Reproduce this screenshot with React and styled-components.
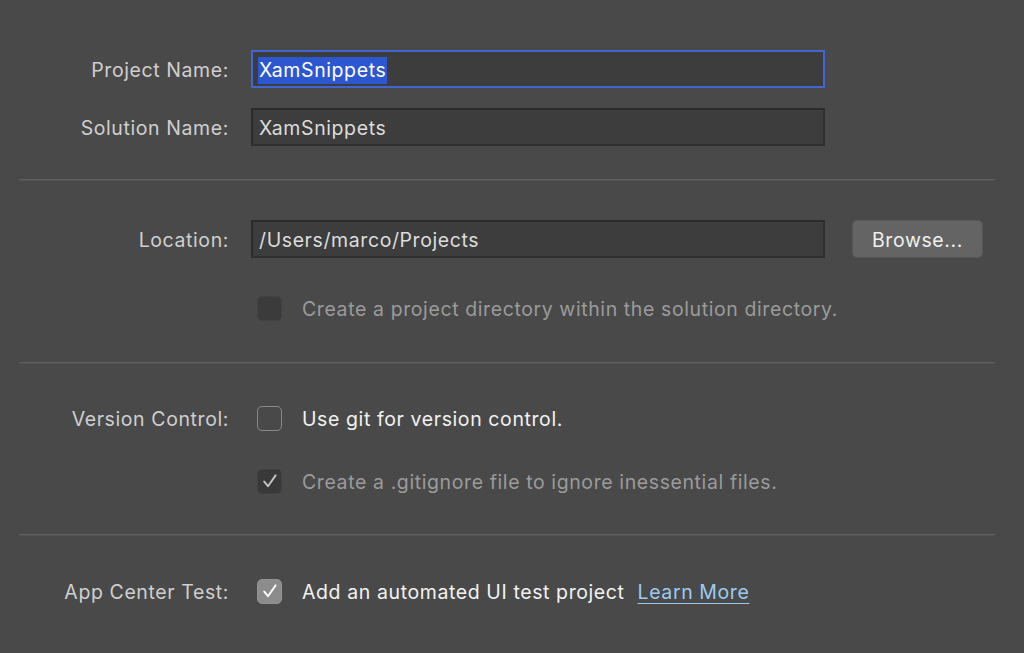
import React from "react";
import styled, { createGlobalStyle } from "styled-components";

const Global = createGlobalStyle`
  html, body {
    margin: 0;
    padding: 0;
    background: #494949;
  }
  body {
    font-family: "Inter", "Liberation Sans", sans-serif;
    -webkit-font-smoothing: antialiased;
  }
`;

export default function App() {
  return (
    <>
      <Global />
      <Page>
        <Section $top={50} $bottom={33}>
          <FieldRow>
            <Label>Project Name:</Label>
            <Input $focused>
              <Selected>XamSnippets</Selected>
            </Input>
          </FieldRow>
          <FieldRow>
            <Label>Solution Name:</Label>
            <Input>XamSnippets</Input>
          </FieldRow>
        </Section>
        <Divider />
        <Section $top={39} $bottom={42} $gap={38}>
          <FieldRow>
            <Label>Location:</Label>
            <Input>/Users/marco/Projects</Input>
            <Button>Browse...</Button>
          </FieldRow>
          <CheckRow>
            <Label />
            <Check $variant="disabled" />
            <CheckText $dim>Create a project directory within the solution directory.</CheckText>
          </CheckRow>
        </Section>
        <Divider />
        <Section $top={42} $bottom={41} $gap={39}>
          <CheckRow>
            <Label>Version Control:</Label>
            <Check $variant="empty" />
            <CheckText>Use git for version control.</CheckText>
          </CheckRow>
          <CheckRow>
            <Label />
            <Check $variant="checkedDim">
              <Tick color="#c4c4c4" />
            </Check>
            <CheckText $dim>Create a .gitignore file to ignore inessential files.</CheckText>
          </CheckRow>
        </Section>
        <Divider />
        <Section $top={43} $bottom={40}>
          <CheckRow>
            <Label>App Center Test:</Label>
            <Check $variant="checked">
              <Tick color="#ffffff" />
            </Check>
            <CheckText>Add an automated UI test project</CheckText>
            <Link>Learn More</Link>
          </CheckRow>
        </Section>
      </Page>
    </>
  );
}

function Tick({ color }) {
  return (
    <svg width="18" height="18" viewBox="0 0 18 18" fill="none">
      <path
        d="M3.2 9.6 L7 14.2 L14.6 3.4"
        stroke={color}
        strokeWidth="1.9"
        strokeLinecap="round"
        strokeLinejoin="round"
      />
    </svg>
  );
}

const Page = styled.div`
  width: 1024px;
  height: 653px;
  overflow: hidden;
  box-sizing: border-box;
  display: flex;
  flex-direction: column;
`;

const Section = styled.div`
  display: flex;
  flex-direction: column;
  gap: ${(p) => p.$gap ?? 20}px;
  padding-top: ${(p) => p.$top}px;
  padding-bottom: ${(p) => p.$bottom}px;
`;

const Divider = styled.div`
  height: 1px;
  margin: 0 29px 0 19px;
  background: #606060;
  border-bottom: 1px solid #525252;
`;

const FieldRow = styled.div`
  display: flex;
  align-items: center;
  height: 38px;
`;

const CheckRow = styled.div`
  display: flex;
  align-items: center;
  height: 24px;
`;

const Text = styled.span`
  font-size: 19.5px;
  letter-spacing: 0.6px;
  white-space: nowrap;
  padding-top: 2px;
`;

const Label = styled(Text)`
  display: block;
  width: 229px;
  flex-shrink: 0;
  text-align: right;
  color: #cfcfcf;
  padding-right: 22px;
  box-sizing: content-box;
`;

const Input = styled.div`
  width: 574px;
  height: 38px;
  box-sizing: border-box;
  display: flex;
  align-items: center;
  padding: 2px 0 0 6px;
  background: #3d3d3d;
  border: 2px solid ${(p) => (p.$focused ? "#3f66d1" : "#2b2b2b")};
  border-right-color: ${(p) => (p.$focused ? "#3f66d1" : "#303030")};
  border-bottom-color: ${(p) => (p.$focused ? "#3f66d1" : "#2f2f2f")};
  color: #dcdcdc;
  font-size: 19.5px;
  letter-spacing: 0.6px;
  white-space: nowrap;
`;

const Selected = styled.span`
  background: #2d57d0;
  color: #ffffff;
  padding: 1px 1px 2px 1px;
  margin-left: -1px;
`;

const Button = styled.div`
  margin-left: 27px;
  width: 131px;
  height: 38px;
  box-sizing: border-box;
  padding-top: 2px;
  border-radius: 5px;
  background: #646464;
  border: 1px solid #575757;
  display: flex;
  align-items: center;
  justify-content: center;
  color: #f0f0f0;
  font-size: 19.5px;
  letter-spacing: 0.6px;
`;

const checkStyles = {
  disabled: "background: #3b3b3b; border: 1px solid #424242;",
  empty: "background: transparent; border: 1.5px solid #8a8a8a;",
  checkedDim: "background: #393939; border: 1px solid #404040;",
  checked: "background: #8c8c8c; border: 1px solid #939393;",
};

const Check = styled.div`
  width: 25px;
  height: 25px;
  box-sizing: border-box;
  margin-left: 6px;
  margin-right: 20px;
  border-radius: 5px;
  display: flex;
  align-items: center;
  justify-content: center;
  flex-shrink: 0;
  ${(p) => checkStyles[p.$variant]}
`;

const CheckText = styled(Text)`
  color: ${(p) => (p.$dim ? "#9b9b9b" : "#f2f2f2")};
`;

const Link = styled(Text)`
  margin-left: 13px;
  color: #9ccbf0;
  text-decoration: underline;
  text-underline-offset: 4px;
  text-decoration-thickness: 1px;
`;
